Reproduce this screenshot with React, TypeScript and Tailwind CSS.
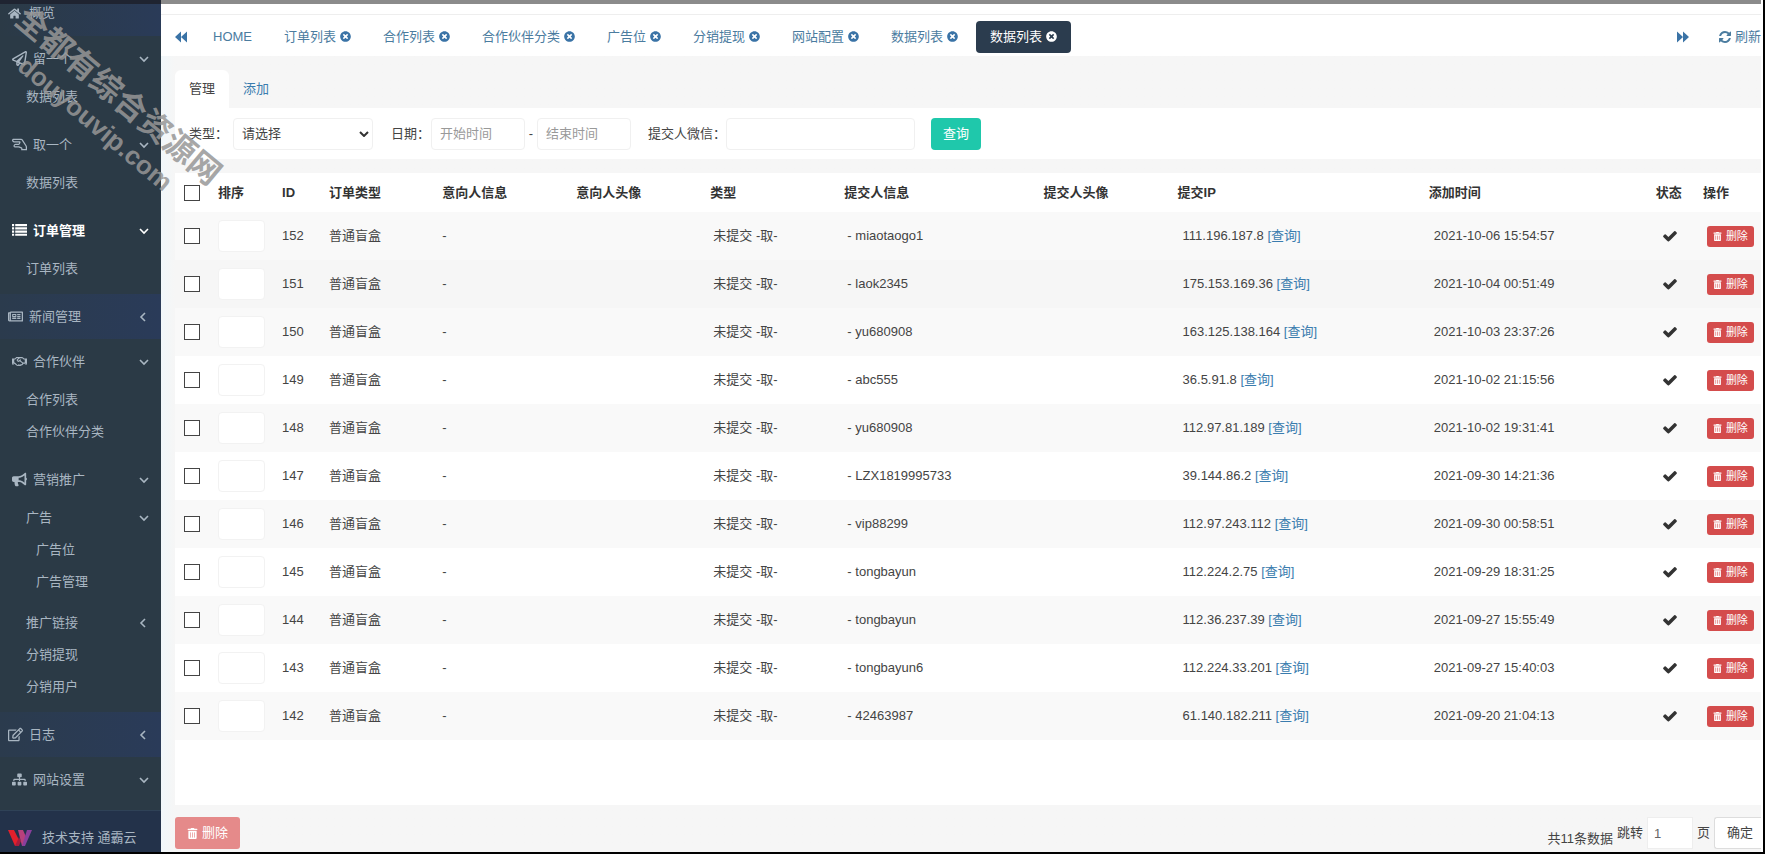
import React, { useState } from "react";
import {
  FaBullhorn,
  FaHome,
  FaRegEdit,
  FaRegHandLizard,
  FaRegHandshake,
  FaRegNewspaper,
  FaRegPaperPlane,
  FaSitemap,
  FaTimesCircle,
  FaTrashAlt,
} from "react-icons/fa";

type Icon = React.ComponentType<{ className?: string }>;

interface SubItem {
  label: string;
  state?: "open" | "closed";
  children?: string[];
}

interface MenuGroup {
  label: string;
  icon: Icon;
  open: boolean;
  active?: boolean;
  items?: SubItem[];
}

interface Order {
  id: number;
  user: string;
  ip: string;
  time: string;
}

const ListIcon: Icon = ({ className }) => (
  <svg viewBox="0 0 14 14" className={className} fill="currentColor" aria-hidden="true">
    <path d="M0 1h2v2H0zM3 1h11v2H3zM0 4h2v2H0zM3 4h11v2H3zM0 7h2v2H0zM3 7h11v2H3zM0 10h2v2H0zM3 10h11v2H3z" />
  </svg>
);

const Chevron = ({ open }: { open: boolean }) => (
  <svg
    viewBox="0 0 10 10"
    className="size-[10px]"
    fill="none"
    stroke="currentColor"
    strokeWidth="1.6"
    aria-hidden="true"
  >
    <path d={open ? "M1 3l4 4 4-4" : "M6 1L2 5l4 4"} />
  </svg>
);

const Arrows = ({ back }: { back?: boolean }) => (
  <svg viewBox="0 0 12 12" className="size-3" fill="currentColor" aria-hidden="true">
    <path d={back ? "M6 0.5v11L0 6zM12 0.5v11L6 6z" : "M0 0.5v11L6 6zM6 0.5v11L12 6z"} />
  </svg>
);

const RefreshIcon = () => (
  <svg viewBox="0 0 1536 1536" className="size-3" fill="currentColor" aria-hidden="true">
    <path d="M1511 928q0 5-1 7-64 268-268 434.5t-478 166.5q-146 0-282.5-55t-243.5-157l-129 129q-19 19-45 19t-45-19-19-45v-448q0-26 19-45t45-19h448q26 0 45 19t19 45-19 45l-137 137q71 66 161 102t187 36q134 0 250-65t186-179q11-17 53-117 8-23 30-23h192q13 0 22.5 9.5t9.5 22.5zm25-800v448q0 26-19 45t-45 19h-448q-26 0-45-19t-19-45 19-45l138-138q-148-137-349-137-134 0-250 65t-186 179q-11 17-53 117-8 23-30 23h-199q-13 0-22.5-9.5t-9.5-22.5v-7q65-268 270-434.5t480-166.5q146 0 284 55.5t245 156.5l130-129q19-19 45-19t45 19 19 45z" />
  </svg>
);

const CheckIcon = () => (
  <svg viewBox="0 0 1792 1792" className="size-4" fill="#333" aria-hidden="true">
    <path d="M1671 566q0 40-28 68l-724 724-136 136q-28 28-68 28t-68-28l-136-136-362-362q-28-28-28-68t28-68l136-136q28-28 68-28t68 28l294 295 656-657q28-28 68-28t68 28l136 136q28 28 28 68z" />
  </svg>
);

const menu: MenuGroup[] = [
  { label: "留一个", icon: FaRegPaperPlane, open: true, items: [{ label: "数据列表" }] },
  { label: "取一个", icon: FaRegHandLizard, open: true, items: [{ label: "数据列表" }] },
  { label: "订单管理", icon: ListIcon, open: true, active: true, items: [{ label: "订单列表" }] },
  { label: "新闻管理", icon: FaRegNewspaper, open: false },
  {
    label: "合作伙伴",
    icon: FaRegHandshake,
    open: true,
    items: [{ label: "合作列表" }, { label: "合作伙伴分类" }],
  },
  {
    label: "营销推广",
    icon: FaBullhorn,
    open: true,
    items: [
      { label: "广告", state: "open", children: ["广告位", "广告管理"] },
      { label: "推广链接", state: "closed" },
      { label: "分销提现" },
      { label: "分销用户" },
    ],
  },
  { label: "日志", icon: FaRegEdit, open: false },
  { label: "网站设置", icon: FaSitemap, open: true },
];

const tabs = ["订单列表", "合作列表", "合作伙伴分类", "广告位", "分销提现", "网站配置", "数据列表"];

const orders: Order[] = [
  { id: 152, user: "miaotaogo1", ip: "111.196.187.8", time: "2021-10-06 15:54:57" },
  { id: 151, user: "laok2345", ip: "175.153.169.36", time: "2021-10-04 00:51:49" },
  { id: 150, user: "yu680908", ip: "163.125.138.164", time: "2021-10-03 23:37:26" },
  { id: 149, user: "abc555", ip: "36.5.91.8", time: "2021-10-02 21:15:56" },
  { id: 148, user: "yu680908", ip: "112.97.81.189", time: "2021-10-02 19:31:41" },
  { id: 147, user: "LZX1819995733", ip: "39.144.86.2", time: "2021-09-30 14:21:36" },
  { id: 146, user: "vip88299", ip: "112.97.243.112", time: "2021-09-30 00:58:51" },
  { id: 145, user: "tongbayun", ip: "112.224.2.75", time: "2021-09-29 18:31:25" },
  { id: 144, user: "tongbayun", ip: "112.36.237.39", time: "2021-09-27 15:55:49" },
  { id: 143, user: "tongbayun6", ip: "112.224.33.201", time: "2021-09-27 15:40:03" },
  { id: 142, user: "42463987", ip: "61.140.182.211", time: "2021-09-20 21:04:13" },
];

const columns = [
  { title: "排序", width: "w-[64px]" },
  { title: "ID", width: "w-[47px]" },
  { title: "订单类型", width: "w-[113px]" },
  { title: "意向人信息", width: "w-[134px]" },
  { title: "意向人头像", width: "w-[134px]" },
  { title: "类型", width: "w-[134px]" },
  { title: "提交人信息", width: "w-[199px]" },
  { title: "提交人头像", width: "w-[134px]" },
  { title: "提交IP", width: "w-[251px]" },
  { title: "添加时间", width: "w-[227px]" },
  { title: "状态", width: "w-[47px]" },
  { title: "操作", width: "w-[66px]" },
];

const checkboxClass =
  "block size-4 appearance-none border border-[#444] bg-white checked:bg-[#2b3a48]";
const fieldClass =
  "h-8 rounded-sm border border-[#f0f0f0] bg-white text-[#444] outline-none placeholder:text-[#999]";

function Sidebar() {
  return (
    <aside className="flex w-[161px] shrink-0 flex-col bg-[#2b3a46] text-[#a9b6c2]">
      <div className="h-1 bg-[#1f2431]" />
      <nav className="flex-1">
        <a
          href="#"
          className="flex h-8 items-center gap-2 bg-linear-to-r from-[#2b3a46] to-[#2a3b58] pb-[14px] pl-2"
        >
          <FaHome className="size-[13px]" />
          <span>概览</span>
        </a>
        {menu.map((group) => (
          <div key={group.label}>
            <a
              href="#"
              className={
                group.open
                  ? `flex h-[45px] items-center gap-1.5 pr-3 pl-3 ${
                      group.active ? "font-bold text-white" : ""
                    }`
                  : "flex h-[45px] items-center gap-1.5 bg-linear-to-r from-[#2b3b4d] to-[#2a3b59] pr-3 pl-2"
              }
            >
              <group.icon className="size-[15px] shrink-0" />
              <span className="flex-1">{group.label}</span>
              <Chevron open={group.open} />
            </a>
            {group.items && <SubMenu items={group.items} />}
          </div>
        ))}
      </nav>
      <footer className="flex h-[42px] items-center gap-2.5 border-t border-[#2f4257] bg-[#23324a] pt-3 pl-2">
        <Logo />
        <span>技术支持 通霸云</span>
      </footer>
    </aside>
  );
}

function SubMenu({ items }: { items: SubItem[] }) {
  return (
    <ul className="pb-[9px]">
      {items.map((item) => (
        <li key={item.label}>
          <a href="#" className="flex h-8 items-center justify-between pr-3 pl-[26px]">
            <span>{item.label}</span>
            {item.state && <Chevron open={item.state === "open"} />}
          </a>
          {item.children && (
            <ul className="pb-[9px]">
              {item.children.map((child) => (
                <li key={child}>
                  <a href="#" className="flex h-8 items-center pl-9">
                    {child}
                  </a>
                </li>
              ))}
            </ul>
          )}
        </li>
      ))}
    </ul>
  );
}

function Logo() {
  return (
    <svg viewBox="0 0 24 16" className="h-4 w-6" aria-hidden="true">
      <path d="M0 0h6l5 10-2 6H7z" fill="#e3202c" />
      <path d="M7 16l4-9 2 4-2 5z" fill="#a81c3c" />
      <path d="M10 0h5l4 9-3 7h-2z" fill="#b8407c" />
      <path d="M19 0h5l-7 16h-3z" fill="#8a3f9c" />
    </svg>
  );
}

function TabBar() {
  return (
    <div className="flex h-[42px] items-center border-t border-[#eee] bg-white pt-1 pb-0.5 text-[#4b7c9f]">
      <button type="button" aria-label="向左" className="w-[38px] pl-[14px] text-[#3a73a6]">
        <Arrows back />
      </button>
      <div className="flex flex-1 gap-1">
        <a href="#" className="flex h-8 items-center px-[14px]">
          HOME
        </a>
        {tabs.map((tab) => (
          <a key={tab} href="#" className="flex h-8 items-center gap-1 px-[14px]">
            {tab}
            <FaTimesCircle className="size-[11px] text-[#3a73a6]" />
          </a>
        ))}
        <a
          href="#"
          className="flex h-8 items-center gap-1 rounded bg-[#2b3c4e] px-[14px] text-white"
        >
          数据列表
          <FaTimesCircle className="size-[11px]" />
        </a>
      </div>
      <button type="button" aria-label="向右" className="mr-[30px] text-[#3a73a6]">
        <Arrows />
      </button>
      <button type="button" className="flex items-center gap-1">
        <RefreshIcon />
        刷新
      </button>
    </div>
  );
}

function Filters() {
  return (
    <form
      className="flex h-[51px] items-center bg-white pl-[14px]"
      onSubmit={(e) => e.preventDefault()}
    >
      <label htmlFor="tipo" className="w-11">
        类型：
      </label>
      <div className="relative">
        <select id="tipo" className={`${fieldClass} w-[140px] appearance-none pl-2`}>
          <option>请选择</option>
        </select>
        <svg
          viewBox="0 0 10 6"
          className="pointer-events-none absolute top-[13px] right-1 h-[6px] w-[10px]"
          fill="none"
          stroke="#333"
          strokeWidth="2"
        >
          <path d="M1 1l4 4 4-4" />
        </svg>
      </div>
      <label htmlFor="inicio" className="ml-[18px] w-10">
        日期：
      </label>
      <input id="inicio" placeholder="开始时间" className={`${fieldClass} w-[94px] px-2`} />
      <span className="w-3 text-center">-</span>
      <input
        aria-label="结束时间"
        placeholder="结束时间"
        className={`${fieldClass} w-[94px] px-2`}
      />
      <label htmlFor="wechat" className="ml-[17px] w-[78px]">
        提交人微信：
      </label>
      <input id="wechat" className={`${fieldClass} w-[189px] px-2`} />
      <button type="submit" className="ml-4 h-8 rounded bg-[#1fc8ab] px-3 text-white">
        查询
      </button>
    </form>
  );
}

function OrdersTable() {
  return (
    <table className="w-full table-fixed text-left text-[#444]">
      <thead>
        <tr className="h-[39px] bg-white text-[#333]">
          <th className="w-[35px] pl-[9px]">
            <input type="checkbox" aria-label="全选" className={checkboxClass} />
          </th>
          {columns.map((col) => (
            <th key={col.title} className={`${col.width} pl-2 font-bold whitespace-nowrap`}>
              {col.title}
            </th>
          ))}
        </tr>
      </thead>
      <tbody>
        {orders.map((order) => (
          <tr
            key={order.id}
            className={
              order.id === 151
                ? "h-12 bg-[#f6f6f6]"
                : "h-12 odd:bg-[#f9f9f9] even:bg-white"
            }
          >
            <td className="pl-[9px]">
              <input type="checkbox" aria-label={String(order.id)} className={checkboxClass} />
            </td>
            <td className="pl-2">
              <input
                aria-label={`排序 ${order.id}`}
                className="block h-8 w-[47px] rounded-sm border border-[#f2f2f2] bg-white px-2"
              />
            </td>
            <td className="pl-2">{order.id}</td>
            <td className="pl-2">普通盲盒</td>
            <td className="pl-2">-</td>
            <td />
            <td className="pl-[11px]">未提交 -取-</td>
            <td className="pl-[11px]">- {order.user}</td>
            <td />
            <td className="pl-[13px]">
              {order.ip}{" "}
              <a href="#" className="text-[#3a7cae]">
                [查询]
              </a>
            </td>
            <td className="pl-[13px]">{order.time}</td>
            <td className="pl-[14px]">
              <CheckIcon />
            </td>
            <td className="pl-3">
              <button
                type="button"
                className="flex h-[21px] items-center gap-1 rounded-[3px] bg-[#d44c4c] px-1.5 text-[11px] text-white"
              >
                <FaTrashAlt className="size-[9px]" />
                删除
              </button>
            </td>
          </tr>
        ))}
      </tbody>
    </table>
  );
}

function Pager() {
  const [page, setPage] = useState("1");

  return (
    <div className="flex h-[47px] items-center justify-between pt-3 pb-[3px]">
      <button
        type="button"
        className="flex h-8 items-center gap-1 rounded-[3px] bg-[#e58a8a] px-3 text-white"
      >
        <FaTrashAlt className="size-[11px]" />
        删除
      </button>
      <div className="flex items-center gap-1 text-[#444]">
        <span className="pt-3">共11条数据</span>
        <label htmlFor="page">跳转</label>
        <input
          id="page"
          value={page}
          onChange={(e) => setPage(e.target.value)}
          className="h-8 w-[46px] border border-[#eee] bg-white px-1.5 text-[#666]"
        />
        <span>页</span>
        <button
          type="button"
          className="h-8 rounded-l-[3px] border border-r-0 border-[#ddd] bg-white pr-2 pl-3"
        >
          确定
        </button>
      </div>
    </div>
  );
}

function Watermark() {
  return (
    <div className="pointer-events-none absolute top-0 left-8 origin-top-left rotate-[40deg] font-bold whitespace-nowrap text-[#979797]/85">
      <div className="text-[32px] leading-9">全都有综合资源网</div>
      <div className="pl-8 text-[26px] leading-9">douyouvip.com</div>
    </div>
  );
}

function App() {
  return (
    <div className="relative flex min-h-screen overflow-hidden border-r-2 border-b-2 border-black bg-white font-['Liberation_Sans','Noto_Sans_CJK_SC',sans-serif] text-[13px] leading-5 text-[#444]">
      <Sidebar />
      <main className="flex min-w-0 flex-1 flex-col pr-0.5">
        <div className="h-1 bg-[#8b8b8b]" />
        <div className="h-2.5 bg-white" />
        <TabBar />
        <div className="flex flex-1 flex-col bg-linear-to-r from-[#f1f7fa] to-[#f6f6f6] to-[14px] pl-[14px]">
          <div className="flex pt-[14px]">
            <a href="#" className="flex h-[38px] items-center rounded-t-md bg-white px-[14px]">
              管理
            </a>
            <a href="#" className="flex h-[38px] items-center px-[14px] text-[#3a7cae]">
              添加
            </a>
          </div>
          <Filters />
          <div className="mt-[14px] flex-1 bg-white">
            <OrdersTable />
          </div>
          <Pager />
        </div>
      </main>
      <Watermark />
    </div>
  );
}

export default App;
